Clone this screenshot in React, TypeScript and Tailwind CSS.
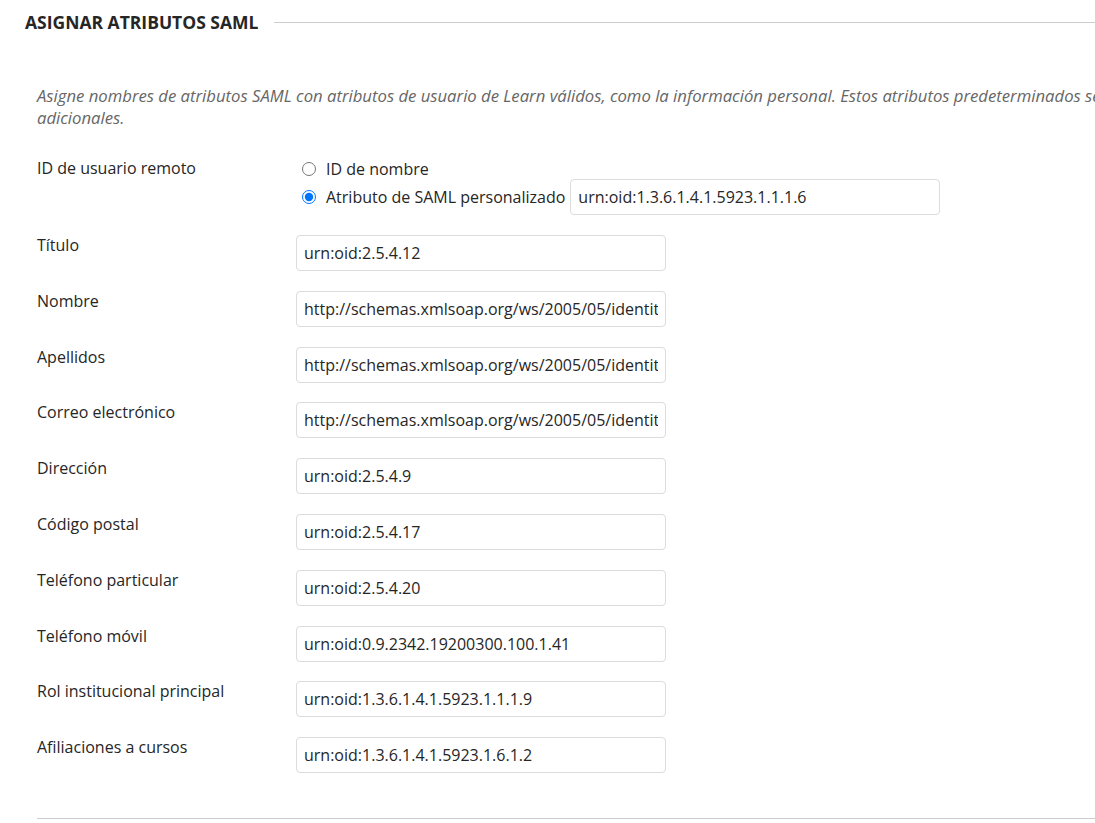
import React from 'react';

const FIELDS = [
  { label: 'Título', value: 'urn:oid:2.5.4.12' },
  { label: 'Nombre', value: 'http://schemas.xmlsoap.org/ws/2005/05/identity/claims/givenname' },
  { label: 'Apellidos', value: 'http://schemas.xmlsoap.org/ws/2005/05/identity/claims/surname' },
  { label: 'Correo electrónico', value: 'http://schemas.xmlsoap.org/ws/2005/05/identity/claims/emailaddress' },
  { label: 'Dirección', value: 'urn:oid:2.5.4.9' },
  { label: 'Código postal', value: 'urn:oid:2.5.4.17' },
  { label: 'Teléfono particular', value: 'urn:oid:2.5.4.20' },
  { label: 'Teléfono móvil', value: 'urn:oid:0.9.2342.19200300.100.1.41' },
  { label: 'Rol institucional principal', value: 'urn:oid:1.3.6.1.4.1.5923.1.1.1.9' },
  { label: 'Afiliaciones a cursos', value: 'urn:oid:1.3.6.1.4.1.5923.1.6.1.2' },
];

const inputCls =
  'h-9 w-[370px] rounded-[4px] border border-[#dcdcdc] bg-white px-[7px] text-[16px] text-[#262626] outline-none';

export default function App() {
  return (
    <div className="w-full h-[823px] overflow-hidden bg-white font-['Open_Sans',sans-serif] text-[#262626]">
      {/* heading */}
      <div className="flex items-center pl-[25px] pt-[11px]">
        <h2 className="text-[17.5px] font-bold uppercase leading-[22px] text-[#262626] whitespace-nowrap">
          Asignar atributos SAML
        </h2>
        <div className="ml-4 h-px flex-1 bg-[#cdcdcd]" />
      </div>

      <div className="pl-[37px] pt-[52px]">
        <p className="text-[16.7px] italic leading-[22px] text-[#666] whitespace-nowrap">
          Asigne nombres de atributos SAML con atributos de usuario de Learn válidos, como la información personal. Estos atributos predeterminados se
          <br />
          adicionales.
        </p>

        {/* remote user id */}
        <div className="mt-[28px] flex">
          <div className="w-[259px] text-[16px] leading-[22px]">ID de usuario remoto</div>
          <div className="flex flex-col pt-[2px]">
            <label className="flex items-center h-[20px] text-[16px]">
              <input type="radio" name="uid" className="ml-[6px] mr-[10px] h-[14px] w-[14px]" />
              ID de nombre
            </label>
            <label className="flex items-center text-[16px]">
              <input type="radio" name="uid" defaultChecked className="ml-[6px] mr-[10px] h-[14px] w-[14px] accent-[#0075ff]" />
              <span className="mr-[5px]">Atributo de SAML personalizado</span>
              <input className={inputCls} defaultValue="urn:oid:1.3.6.1.4.1.5923.1.1.1.6" />
            </label>
          </div>
        </div>

        <div className="mt-[20px] flex flex-col gap-[19.8px]">
          {FIELDS.map((f) => (
            <div key={f.label} className="flex">
              <div className="-mt-[1px] w-[259px] text-[16px] leading-[22px]">{f.label}</div>
              <input className={inputCls} defaultValue={f.value} />
            </div>
          ))}
        </div>

        <div className="mt-[45px] h-px bg-[#cdcdcd]" />
      </div>
    </div>
  );
}
